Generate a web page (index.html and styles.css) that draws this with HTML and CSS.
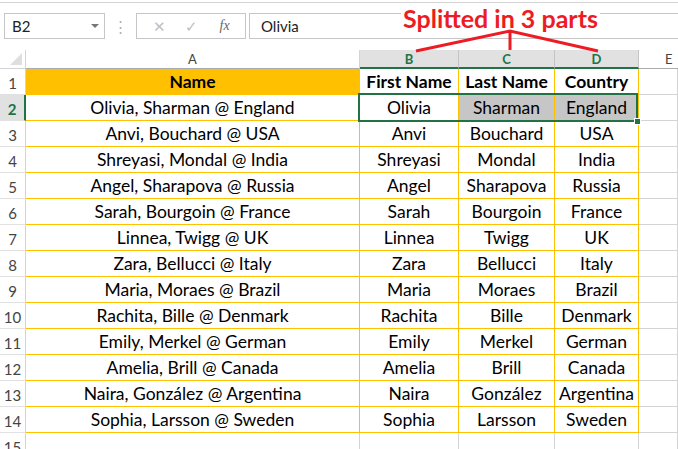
FILE: index.html
```html
<!DOCTYPE html>
<html lang="en">
<head>
    <meta charset="UTF-8">
    <meta name="viewport" content="width=device-width, initial-scale=1.0">
    <link rel="stylesheet" href="styles.css">
</head>
<body>
    <div class="toolbar">
        <div class="namebox">B2<span class="caret"></span></div>
        <div class="grip">&#8942;</div>
        <div class="fxbuttons">
            <span class="btn">&#10005;</span>
            <span class="btn check">&#10003;</span>
            <span class="btn fx">fx</span>
        </div>
        <div class="formula">Olivia</div>
    </div>

    <div class="sheet">
        <div class="corner"></div>
        <div class="ch">A</div>
        <div class="ch sel">B</div>
        <div class="ch sel">C</div>
        <div class="ch sel">D</div>
        <div class="ch last">E</div>

        <div class="rh">1</div>
        <div class="c t head name">Name</div>
        <div class="c t head">First Name</div>
        <div class="c t head">Last Name</div>
        <div class="c t head">Country</div>
        <div class="c"></div>

        <div class="rh on">2</div>
        <div class="c t">Olivia, Sharman @ England</div>
        <div class="c t active">Olivia<span class="selection"></span></div>
        <div class="c t grey">Sharman</div>
        <div class="c t grey">England</div>
        <div class="c"></div>

        <div class="rh">3</div>
        <div class="c t">Anvi, Bouchard @ USA</div>
        <div class="c t">Anvi</div>
        <div class="c t">Bouchard</div>
        <div class="c t">USA</div>
        <div class="c"></div>

        <div class="rh">4</div>
        <div class="c t">Shreyasi, Mondal @ India</div>
        <div class="c t">Shreyasi</div>
        <div class="c t">Mondal</div>
        <div class="c t">India</div>
        <div class="c"></div>

        <div class="rh">5</div>
        <div class="c t">Angel, Sharapova @ Russia</div>
        <div class="c t">Angel</div>
        <div class="c t">Sharapova</div>
        <div class="c t">Russia</div>
        <div class="c"></div>

        <div class="rh">6</div>
        <div class="c t">Sarah, Bourgoin @ France</div>
        <div class="c t">Sarah</div>
        <div class="c t">Bourgoin</div>
        <div class="c t">France</div>
        <div class="c"></div>

        <div class="rh">7</div>
        <div class="c t">Linnea, Twigg @ UK</div>
        <div class="c t">Linnea</div>
        <div class="c t">Twigg</div>
        <div class="c t">UK</div>
        <div class="c"></div>

        <div class="rh">8</div>
        <div class="c t">Zara, Bellucci @ Italy</div>
        <div class="c t">Zara</div>
        <div class="c t">Bellucci</div>
        <div class="c t">Italy</div>
        <div class="c"></div>

        <div class="rh">9</div>
        <div class="c t">Maria, Moraes @ Brazil</div>
        <div class="c t">Maria</div>
        <div class="c t">Moraes</div>
        <div class="c t">Brazil</div>
        <div class="c"></div>

        <div class="rh">10</div>
        <div class="c t">Rachita, Bille @ Denmark</div>
        <div class="c t">Rachita</div>
        <div class="c t">Bille</div>
        <div class="c t">Denmark</div>
        <div class="c"></div>

        <div class="rh">11</div>
        <div class="c t">Emily, Merkel @ German</div>
        <div class="c t">Emily</div>
        <div class="c t">Merkel</div>
        <div class="c t">German</div>
        <div class="c"></div>

        <div class="rh">12</div>
        <div class="c t">Amelia, Brill @ Canada</div>
        <div class="c t">Amelia</div>
        <div class="c t">Brill</div>
        <div class="c t">Canada</div>
        <div class="c"></div>

        <div class="rh">13</div>
        <div class="c t">Naira, González @ Argentina</div>
        <div class="c t">Naira</div>
        <div class="c t">González</div>
        <div class="c t">Argentina</div>
        <div class="c"></div>

        <div class="rh">14</div>
        <div class="c t">Sophia, Larsson @ Sweden</div>
        <div class="c t">Sophia</div>
        <div class="c t">Larsson</div>
        <div class="c t">Sweden</div>
        <div class="c"></div>

        <div class="rh">15</div>
        <div class="c"></div>
        <div class="c"></div>
        <div class="c"></div>
        <div class="c"></div>
        <div class="c"></div>
    </div>

    <!-- callout drawn over the sheet -->
    <div class="callout">Splitted in 3 parts</div>
    <svg class="arrows" width="678" height="60" viewBox="0 0 678 60">
        <path d="M416 51 L510 31 L598 51 M510 31 L510 50" fill="none" stroke="#ED1C24" stroke-width="3"/>
    </svg>
</body>
</html>
```

FILE: styles.css
```css
body {
    margin: 0;
    width: 678px;
    height: 449px;
    overflow: hidden;
    background: #fff;
    font-family: Lato, "Liberation Sans", Arial, sans-serif;
    position: relative;
}
.toolbar {
    margin-top: 2px;
    height: 48px;
    box-sizing: border-box;
    border-top: 1px solid #d4d4d4;
    display: flex;
    align-items: flex-start;
    padding-top: 10px;
}
.namebox {
    margin-left: 4px;
    width: 101px;
    height: 26px;
    box-sizing: border-box;
    border: 1px solid #c6c6c6;
    font-size: 15px;
    color: #222;
    padding-left: 7px;
    line-height: 24px;
    position: relative;
}
.caret {
    position: absolute;
    right: 5px;
    top: 10px;
    border-left: 4px solid transparent;
    border-right: 4px solid transparent;
    border-top: 4px solid #777;
}
.grip {
    width: 31px;
    text-align: center;
    color: #b0b0b0;
    font-size: 15px;
    line-height: 26px;
}
.fxbuttons {
    width: 110px;
    height: 26px;
    box-sizing: border-box;
    border: 1px solid #c6c6c6;
    display: flex;
    align-items: center;
    justify-content: space-around;
    padding: 0 4px 0 6px;
}
.btn {
    color: #c0c0c0;
    font-size: 15px;
    width: 24px;
    text-align: center;
}
.btn.fx {
    font-family: "Liberation Serif", serif;
    font-style: italic;
    color: #666;
    font-size: 14px;
}
.formula {
    margin-left: 3px;
    flex: 1;
    height: 26px;
    box-sizing: border-box;
    border: 1px solid #c6c6c6;
    border-right: none;
    padding-left: 11px;
    font-size: 15px;
    line-height: 24px;
    color: #222;
}

.sheet {
    display: grid;
    grid-template-columns: 26px 334px 99px 96px 84px 1fr;
    grid-template-rows: 19px repeat(15, 26px);
}
.corner {
    border-right: 1px solid #d4d4d4;
    border-bottom: 1px solid #d4d4d4;
    position: relative;
}
.corner::after {
    content: "";
    position: absolute;
    right: 3px;
    bottom: 3px;
    border-left: 12px solid transparent;
    border-bottom: 12px solid #dfdfdf;
}
.ch {
    border-right: 1px solid #d4d4d4;
    border-bottom: 1px solid #ababab;
    font-size: 13px;
    color: #444;
    text-align: center;
    line-height: 19px;
}
.ch.sel {
    background: #e1e1e1;
    color: #217346;
    font-weight: bold;
    border-right-color: #c4c4c4;
    border-bottom: 2px solid #217346;
    line-height: 17px;
    padding-top: 1px;
}
.ch.last {
    border-right: none;
    text-align: left;
    padding-left: 26px;
}
.rh {
    border-right: 1px solid #d4d4d4;
    border-bottom: 1px solid #e1e1e1;
    font-size: 15px;
    color: #444;
    text-align: center;
    line-height: 28px;
}
.rh.on {
    background: #e1e1e1;
    color: #217346;
    font-weight: bold;
    border-right: 2px solid #217346;
}
.c {
    border-right: 1px solid #d4d4d4;
    border-bottom: 1px solid #d4d4d4;
    font-size: 17.5px;
    text-align: center;
    line-height: 25px;
    color: #000;
    white-space: nowrap;
}
.c.t {
    border-right-color: #ffc000;
    border-bottom-color: #ffc000;
}
.c.head {
    font-weight: bold;
}
.c.name {
    background: #ffc000;
}
.c.grey {
    background: #c6c6c6;
}
.c.active {
    position: relative;
}
.selection {
    position: absolute;
    left: -2px;
    top: -2px;
    width: 276px;
    height: 25px;
    border: 2px solid #217346;
    z-index: 2;
}
.selection::after {
    content: "";
    position: absolute;
    right: -5px;
    bottom: -5px;
    width: 5px;
    height: 5px;
    background: #217346;
    border: 1px solid #fff;
}

.callout {
    position: absolute;
    left: 401px;
    top: 3px;
    color: #ed1c24;
    font-weight: bold;
    font-size: 25px;
    background: #fff;
    padding: 0 2px;
}
.arrows {
    position: absolute;
    left: 0;
    top: 0;
}
```
